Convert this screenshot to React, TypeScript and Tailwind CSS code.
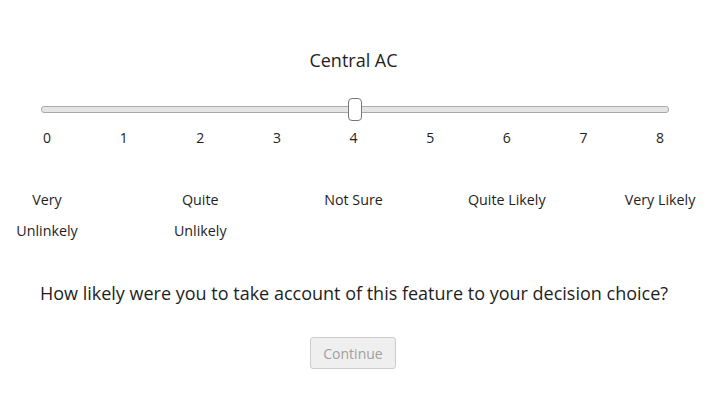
import React from "react";

const ticks = [0, 1, 2, 3, 4, 5, 6, 7, 8];
const labels: string[][] = [
  ["Very", "Unlinkely"],
  ["Quite", "Unlikely"],
  ["Not Sure"],
  ["Quite Likely"],
  ["Very Likely"],
];

export default function App() {
  return (
    <div
      className="w-[718px] h-[404px] bg-white text-[#1e1e1e] overflow-hidden"
      style={{ fontFamily: '"Open Sans", "Noto Sans", sans-serif' }}
    >
      <div className="ml-[41px] w-[628px] pt-[47px]">
        <div className="mr-[3px] text-center text-[18px] leading-[27px]">Central AC</div>

        <div className="relative mt-[32px] h-[7px] rounded-[3px] border border-[#aaaaaa] bg-[#e4e4e4]">
          <div className="absolute left-[306px] top-[-9px] h-[23px] w-[14px] rounded-[4px] border border-[#777777] bg-white" />
        </div>

        <div className="ml-[6px] mr-[9px] mt-[14px] flex justify-between text-[14px] leading-[21px]">
          {ticks.map((t) => (
            <div key={t} className="flex w-0 justify-center whitespace-nowrap">
              {t}
            </div>
          ))}
        </div>

        <div className="ml-[6px] mr-[9px] mt-[36px] flex justify-between text-[14.3px] leading-[31px]">
          {labels.map((l, i) => (
            <div key={i} className="flex w-0 justify-center whitespace-nowrap">
              <div className="text-center">
                {l.map((line, j) => (
                  <div key={j}>{line}</div>
                ))}
              </div>
            </div>
          ))}
        </div>
      </div>

      <div className="mt-[34px] w-[708px] text-center text-[18px] leading-[27px]">
        How likely were you to take account of this feature to your decision choice?
      </div>

      <div className="mt-[30px] flex w-[706px] justify-center">
        <button className="h-[32px] w-[86px] rounded-[3px] border border-[#cccccc] bg-[#efefef] text-[14px] text-[#a0a0a0]">
          Continue
        </button>
      </div>
    </div>
  );
}
